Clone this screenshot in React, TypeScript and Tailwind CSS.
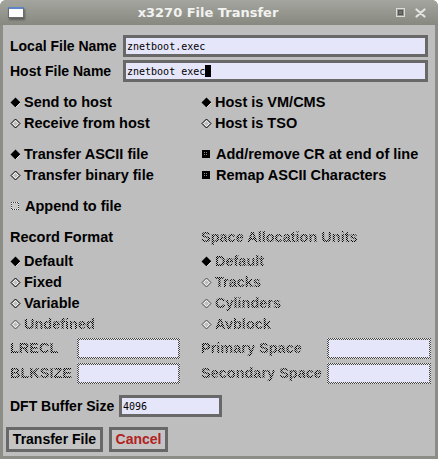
import React from "react";

const stipple =
  "bg-[image:repeating-conic-gradient(#000_0_25%,transparent_0_50%)] bg-[length:2px_2px] bg-clip-text text-transparent";

function Diamond({ on, dim }: { on?: boolean; dim?: boolean }) {
  const c = dim ? "#555" : "#000";
  return (
    <svg width="11" height="11" viewBox="0 0 11 11" className="shrink-0">
      {on ? (
        <>
          <polygon points="5.5,0.5 10.5,5.5 5.5,10.5 0.5,5.5" fill="#000" />
          <polyline points="10.5,5.5 5.5,10.5" stroke="#fff" strokeWidth="0.8" fill="none" />
        </>
      ) : (
        <>
          <polygon points="5.5,1 10,5.5 5.5,10 1,5.5" fill="#bebebe" stroke={c} strokeWidth="1" />
          <polygon points="5.5,2.6 8.4,5.5 5.5,8.4 2.6,5.5" fill="none" stroke="#fff" strokeWidth="0.9" />
        </>
      )}
    </svg>
  );
}

function Check({ on }: { on?: boolean }) {
  return (
    <svg width="9" height="9" viewBox="0 0 9 9" className="shrink-0">
      <defs>
        <pattern id="chk" width="2" height="2" patternUnits="userSpaceOnUse">
          <rect width="2" height="2" fill="#000" />
          <rect width="1" height="1" fill="#8a8a8a" />
        </pattern>
        <pattern id="chk2" width="2" height="2" patternUnits="userSpaceOnUse">
          <rect width="2" height="2" fill="#f0f0f0" />
          <rect width="1" height="1" fill="#333" />
          <rect x="1" y="1" width="1" height="1" fill="#333" />
        </pattern>
      </defs>
      {on ? (
        <>
          <rect x="0" y="0" width="8" height="8" fill="#000" />
          <rect x="2" y="2" width="4" height="4" fill="url(#chk)" />
        </>
      ) : (
        <>
          <rect x="0" y="0" width="8" height="8" fill="url(#chk2)" />
          <rect x="1" y="1" width="6" height="6" fill="#c8c8c8" />
        </>
      )}
    </svg>
  );
}

function Radio({ on, label, disabled }: { on?: boolean; label: string; disabled?: boolean }) {
  return (
    <div className="flex items-center h-[21px] gap-[3px]">
      <Diamond on={on} dim={disabled} />
      <span className={disabled ? stipple : "text-black"}>{label}</span>
    </div>
  );
}

function CheckRow({ on, label }: { on?: boolean; label: string }) {
  return (
    <div className="flex items-center h-[21px] gap-[5px] pl-[1px]">
      <Check on={on} />
      <span className="text-black">{label}</span>
    </div>
  );
}

function DisabledInput({ w }: { w: string }) {
  return (
    <div
      className={`${w} h-[21px] p-[2px] bg-[image:repeating-conic-gradient(#444_0_25%,#e8e8e8_0_50%)] bg-[length:2px_2px]`}
    >
      <div className="w-full h-full bg-[#e6e6fa]" />
    </div>
  );
}

const mono = "font-['DejaVu_Sans_Mono','Liberation_Mono',monospace] font-normal text-[10px] text-black";

export default function App() {
  return (
    <div className="w-[438px] h-[459px] bg-[#8b8d86] rounded-t-[6px] flex flex-col font-['Liberation_Sans',Arial,sans-serif] font-bold text-[14.5px] overflow-hidden">
      {/* Title bar */}
      <div className="h-[25px] shrink-0 relative flex items-center bg-gradient-to-b from-[#a3a59e] to-[#878981] rounded-t-[6px]">
        <div className="ml-[8px] w-[16px] h-[11px] bg-white border border-[#6b6b6b] border-t-[2px] border-t-[#5b86c8] shadow-[1px_2px_2px_rgba(0,0,0,0.35)]" />
        <div className="absolute left-0 right-0 top-0 h-[25px] pr-[22px] flex items-center justify-center font-['DejaVu_Sans',sans-serif] text-[13px] font-bold text-[#f2f2f0]">
          x3270 File Transfer
        </div>
        <div className="ml-auto flex items-center gap-[10px] mr-[12px]">
          <svg width="9" height="9" viewBox="0 0 9 9">
            <rect x="0.5" y="0.5" width="8" height="8" fill="none" stroke="#dcdcdc" strokeWidth="1" />
            <rect x="2.5" y="2.5" width="4" height="4" fill="#6f716a" stroke="#555" strokeWidth="1" />
          </svg>
          <svg width="11" height="10" viewBox="0 0 11 10">
            <path d="M1.5 1.5 L9.5 8.5 M9.5 1.5 L1.5 8.5" stroke="#e4e4e4" strokeWidth="2.2" strokeLinecap="round" />
          </svg>
        </div>
      </div>

      {/* Body */}
      <div className="ml-[3px] mr-[3px] mb-[3px] flex-1 bg-[#bebebe] pt-[10px] flex flex-col">
        {/* File names */}
        <div className="flex items-center h-[22px] pl-[7px]">
          <span className="w-[113px] text-black text-[14px]">Local File Name</span>
          <div className="w-[305px] h-[22px] border-[3px] border-[#686868] bg-[#e6e6fa] flex items-center pl-[1px]">
            <span className={mono}>znetboot.exec</span>
          </div>
        </div>
        <div className="flex items-center h-[22px] pl-[7px] mt-[3px]">
          <span className="w-[113px] text-black text-[14px]">Host File Name</span>
          <div className="w-[305px] h-[22px] border-[3px] border-[#686868] bg-[#e6e6fa] flex items-center pl-[1px]">
            <span className={mono}>znetboot exec</span>
            <span className="inline-block w-[6px] h-[12px] bg-black" />
          </div>
        </div>

        {/* Direction / host */}
        <div className="grid grid-cols-[191px_1fr] pl-[7px] mt-[10px]">
          <Radio on label="Send to host" />
          <Radio on label="Host is VM/CMS" />
          <Radio label="Receive from host" />
          <Radio label="Host is TSO" />
        </div>

        {/* Mode */}
        <div className="grid grid-cols-[191px_1fr] pl-[7px] mt-[10px]">
          <Radio on label="Transfer ASCII file" />
          <CheckRow on label="Add/remove CR at end of line" />
          <Radio label="Transfer binary file" />
          <CheckRow on label="Remap ASCII Characters" />
        </div>

        <div className="pl-[7px] mt-[10px]">
          <CheckRow label="Append to file" />
        </div>

        {/* Record format / Space units */}
        <div className="grid grid-cols-[191px_1fr] pl-[7px] mt-[10px]">
          <div className="h-[21px] flex items-center text-black">Record Format</div>
          <div className="h-[21px] flex items-center">
            <span className={stipple}>Space Allocation Units</span>
          </div>
        </div>
        <div className="grid grid-cols-[191px_1fr] pl-[7px] mt-[3px]">
          <Radio on label="Default" />
          <Radio on label="Default" disabled />
          <Radio label="Fixed" />
          <Radio label="Tracks" disabled />
          <Radio label="Variable" />
          <Radio label="Cylinders" disabled />
          <Radio label="Undefined" disabled />
          <Radio label="Avblock" disabled />
        </div>

        {/* Sizes */}
        <div className="grid grid-cols-[191px_1fr] pl-[7px] mt-[3px]">
          <div className="flex items-center h-[21px]">
            <span className={`w-[67px] ${stipple}`}>LRECL</span>
            <DisabledInput w="w-[103px]" />
          </div>
          <div className="flex items-center h-[21px]">
            <span className={`w-[126px] ${stipple}`}>Primary Space</span>
            <DisabledInput w="w-[104px]" />
          </div>
        </div>
        <div className="grid grid-cols-[191px_1fr] pl-[7px] mt-[4px]">
          <div className="flex items-center h-[21px]">
            <span className={`w-[67px] ${stipple}`}>BLKSIZE</span>
            <DisabledInput w="w-[103px]" />
          </div>
          <div className="flex items-center h-[21px]">
            <span className={`w-[126px] ${stipple}`}>Secondary Space</span>
            <DisabledInput w="w-[104px]" />
          </div>
        </div>

        <div className="flex items-center h-[22px] pl-[7px] mt-[11px]">
          <span className="w-[109px] text-black text-[14px]">DFT Buffer Size</span>
          <div className="w-[103px] h-[22px] border-[3px] border-[#686868] bg-[#e6e6fa] flex items-center pl-[1px]">
            <span className={mono}>4096</span>
          </div>
        </div>

        {/* Buttons */}
        <div className="flex items-center gap-[6px] pl-[3px] mt-[10px]">
          <button className="w-[97px] h-[25px] border-[3px] border-[#686868] bg-[#c4c4c4] text-black font-bold text-[14px] flex items-center justify-center">
            Transfer File
          </button>
          <button className="w-[59px] h-[25px] border-[3px] border-[#686868] bg-[#c4c4c4] text-[#b22222] font-bold text-[14px] flex items-center justify-center">
            Cancel
          </button>
        </div>
      </div>
    </div>
  );
}
